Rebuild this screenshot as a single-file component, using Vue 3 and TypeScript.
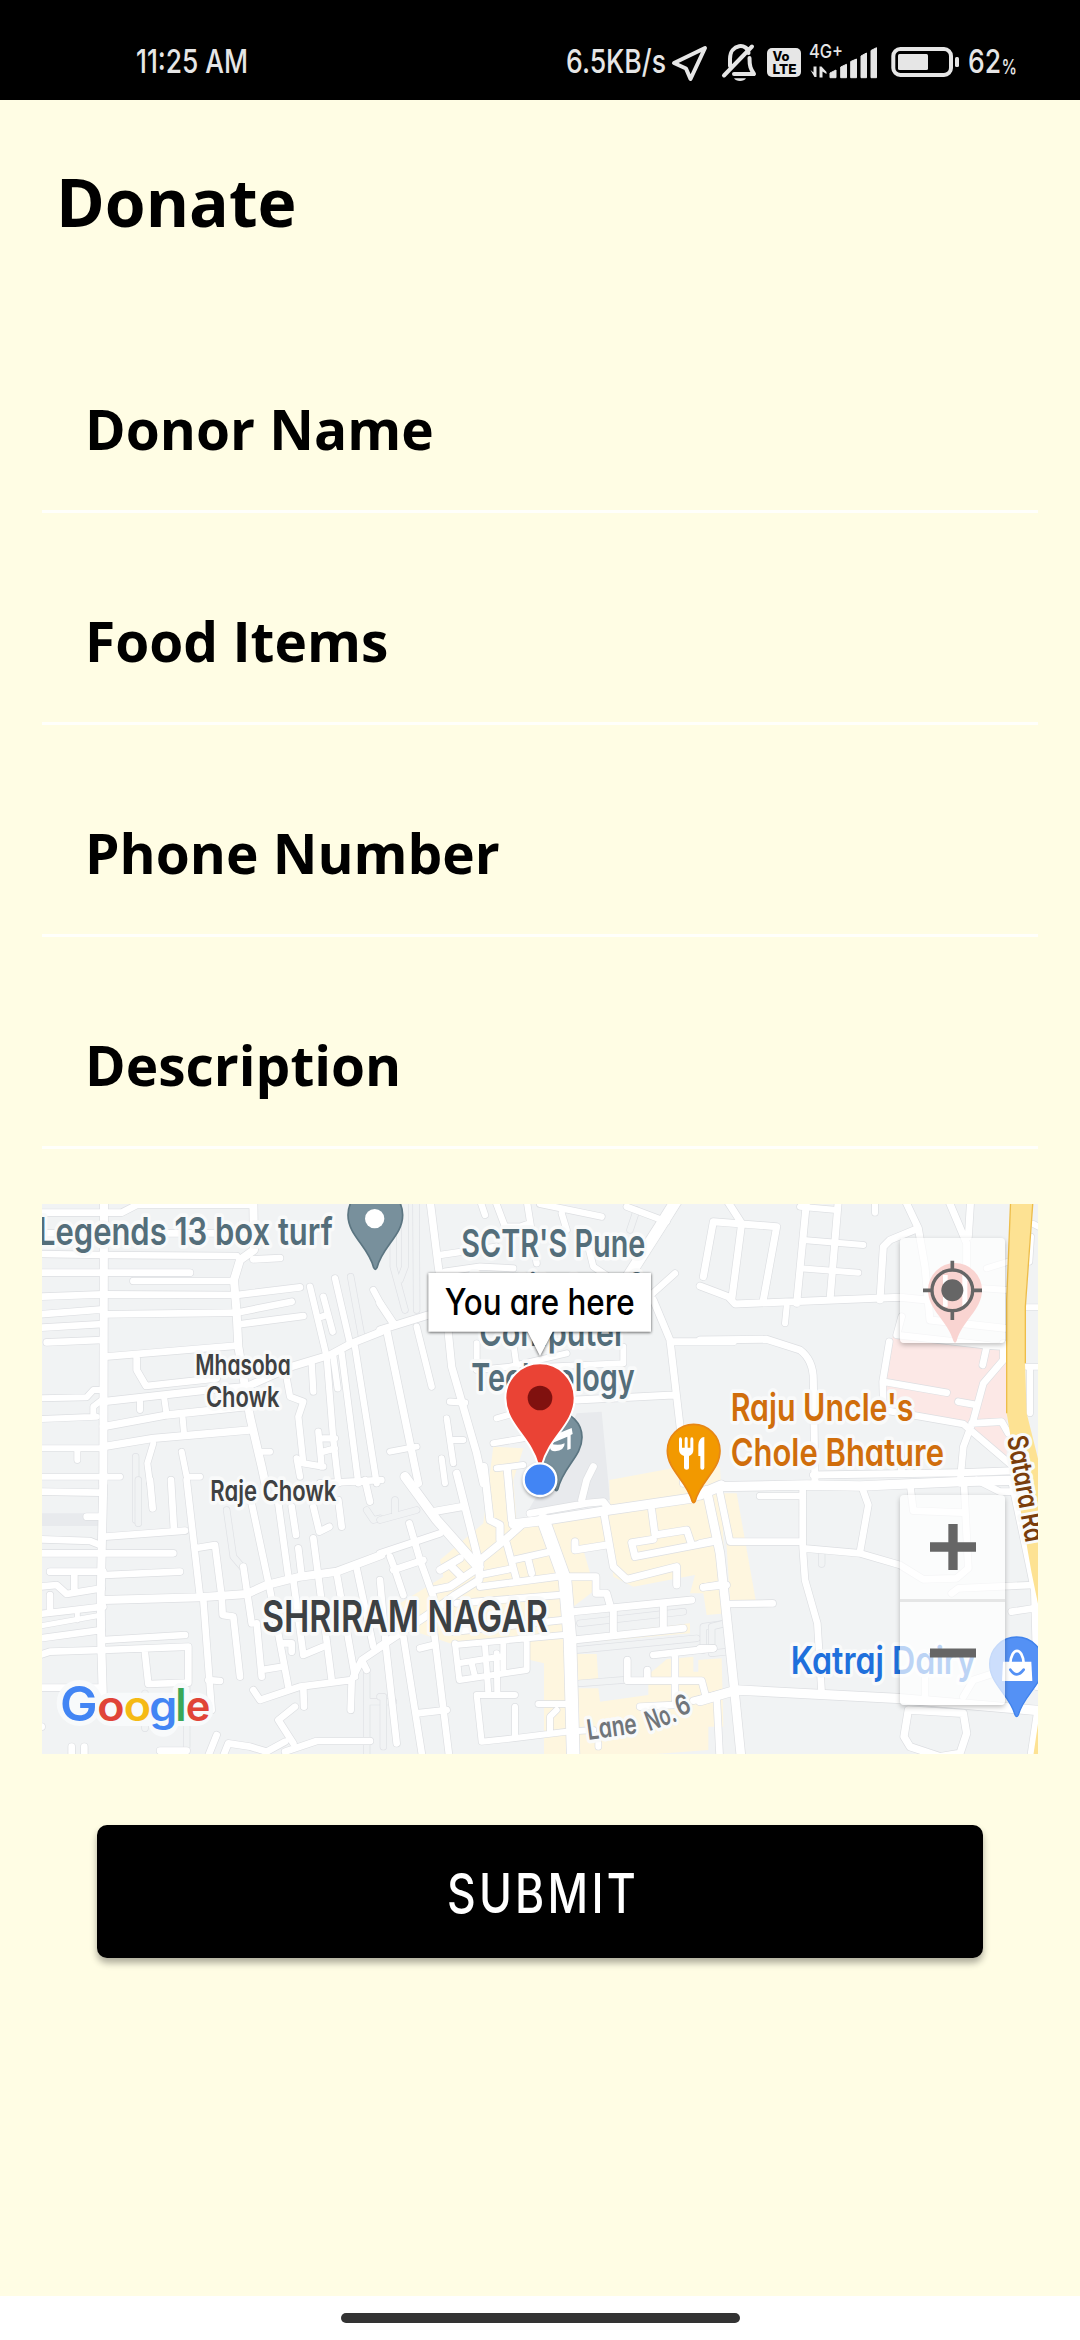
<script setup lang="ts">
interface Tile { x: number; y: number; roads: [number, string][]; alleys: string }
interface Label { x: number; y: number; size: number; len: number; text: string; color: string; rotate?: number; weight?: number }

const fields: string[] = ['Donor Name', 'Food Items', 'Phone Number', 'Description']

const tiles: Tile[] = [
  {
    x: 0, y: 0,
    roads: [
      [24, 'M192 0L190 850M640 0L642 150L600 180L582 240L590 340L595 440L615 560L630 650L665 800L680 870'],
      [20, 'M0 38H245L290 15H640M0 100H640M0 162L190 165L590 168M640 178L720 174M0 218H450M280 243H580M0 290L190 283L590 285L780 262M0 343L190 328M190 343L590 338L755 305M0 383L190 372M605 372L790 348M20 427L185 420M195 470L590 437M290 475V510L318 558L530 535'],
      [22, 'M190 605L520 568L620 560L760 498L870 465L935 430L1024 395M190 680L380 645L620 620M190 740L340 715L630 690'],
      [18, 'M0 745H190M112 750V780M0 657L170 650M160 650V620L185 600M0 595L140 592L160 570H185M300 605V630M372 590L380 645M428 655L432 700M340 730L322 790L330 850M425 755L440 830H480M0 830H240M665 755H690'],
      [19, 'M810 260L860 470L880 720L895 850M850 290L878 395M845 350L860 345M885 235L930 430M905 460L955 850M945 440L1010 850M815 490L820 575M880 470L893 565M740 535L750 590L790 605L775 650L790 790L850 800M835 695L845 800M850 715H885M850 755L885 745M770 775L780 830M1000 270L1024 315'],
    ],
    alleys: 'M932 230L965 410M287 770V960',
  },
  {
    x: 1020, y: 0,
    roads: [
      [22, 'M150 0L175 200L200 350L215 500L290 760L310 850M0 390L145 345M0 310L40 370M20 390L115 850'],
      [19, 'M110 380L155 560M210 605L255 608M180 165L350 140M195 215L300 200L400 205M300 0L315 45M345 0L375 80H420L450 70M440 0L470 190M480 12L665 50M545 40L560 90M740 20L860 65M625 140L640 200L700 240M885 220L740 350'],
      [34, 'M890 0L840 80L700 300'],
      [21, 'M820 300L870 420L905 720L910 850M870 425H1060M590 600L880 585'],
      [18, 'M350 655L385 645M340 730L430 715M200 655L220 790M220 720H250M30 755L110 740M185 775L195 850M350 805L430 795M290 430V510L390 500L560 460M500 500L730 490V440M400 430L410 500'],
    ],
    alleys: 'M40 60V200L75 330M75 0V200L60 240M108 0L110 330M770 30L750 90',
  },
  {
    x: 1980, y: 0,
    roads: [
      [21, 'M0 258L85 290L105 312L400 300L600 292L680 300M10 230L40 65L230 80L190 300M80 0L125 70L95 300M320 0L290 310M415 0L390 300'],
      [18, 'M300 20L410 30M310 120L490 135M300 205L475 218M525 0V38M260 320L255 370M860 205L925 185M800 262L925 270'],
      [21, 'M615 0L655 85L570 120L550 140L540 300M655 85L675 200L690 360L915 385M745 0L800 130V220M812 0L805 110M0 420L200 418L300 450Q340 480 340 540L345 850M340 825L780 818L940 812M605 820L600 760'],
      [20, 'M605 350L590 405L870 437L915 440M568 425L548 545L550 620M550 545L740 578M550 630L790 672L940 800M860 440L848 495M910 430V480L850 550L820 660L790 740L780 850M775 605L830 615M815 670L905 665L925 700'],
      [18, 'M975 322H1020M1000 72L1020 82M993 110L988 185M980 500H1020M990 500V640'],
    ],
    alleys: '',
  },
  {
    x: 0, y: 840,
    roads: [
      [24, 'M190 0L182 350L184 500L190 700M190 360L480 352L620 342L680 315L780 290L890 275L1024 225'],
      [20, 'M0 35L180 38M140 110H180M0 178L150 183L180 195M0 220H400M195 170L435 152M30 275H190M195 285L420 275M103 280V330M0 320L50 315L80 342L185 325M30 345V390M0 402L190 380M0 475L185 450M190 480L435 465M0 525L30 515L190 510L445 500V608L325 612L315 520M0 623H180'],
      [15, 'M0 438L185 405M112 395V420'],
      [20, 'M440 0L480 350M490 360L515 690M393 0L402 150M330 0L338 85M465 205L525 195L545 350L548 405L580 410L600 590M610 260L635 430M635 70L690 330L745 620M715 70L745 290M755 80L768 165M775 205L785 290M820 175L835 290L875 600M820 80L838 155L868 140'],
      [20, 'M760 300L790 525L850 500M640 630L660 660L780 620L935 600L965 540L1024 500M890 280L945 590M950 265L1000 500M935 600L932 690M790 625L792 680M650 430L665 590M665 570L725 560M725 490H755V515M895 60L905 140M975 0L990 65M840 10L1024 0M965 540L980 570'],
      [20, 'M765 680L715 720L760 790M360 812H440M545 840L565 790L630 800L680 815L735 785M735 815L830 783H990M530 765L500 840M95 800V840M133 800V840M505 600L540 603M0 740H5'],
    ],
    alleys: 'M295 0V130M560 90L580 230L610 265M980 580V840M440 620V800M315 640V745M990 665H1060M1020 115L1000 120L980 90',
  },
  {
    x: 1020, y: 840,
    roads: [
      [28, 'M400 132L500 120L690 90L930 55L1024 15M75 -10L170 120L285 250'],
      [38, 'M490 120L555 300L570 480L580 840'],
      [22, 'M230 -20L295 240M160 95L245 80M312 -40L330 120L360 135V180M382 -30L395 120M430 130L380 175L300 240L297 300L225 345L150 400L0 500M180 270L240 235M215 260L245 290M160 330L210 320L300 260'],
      [20, 'M0 220L180 160M88 130L120 240L160 350M30 230L45 270L70 345M40 270L130 240M300 285L400 265M380 190L410 300M400 240L510 215M445 240L455 280M300 320L530 290M230 370L540 345M220 455L550 420M0 300L20 520L50 790M70 470L130 850M160 440L210 850M120 505L160 495M110 700L200 690'],
      [21, 'M450 100L620 70L670 65L690 90M605 60L620 0L640 -40M670 90L700 260L740 298L890 260V315M585 185V210L680 195M815 90L825 165L920 150L935 195M1000 185L765 230L755 188L820 178M560 290H648V340H680L690 375M580 395L935 360M700 385V460M850 370V450M580 480L910 445'],
      [20, 'M820 525L1000 505M885 530V660M742 540V602H965L975 640M802 570V600M780 680L880 675M940 662L1060 632M970 322L1040 315'],
      [18, 'M225 495L550 465M225 490L238 600L440 570V485M370 490V570M315 495L325 640M350 520L352 640M235 550L360 530M275 550L285 590M290 645H405M290 645L305 785L400 775L560 755L640 750M405 680V770M475 672H560M510 755V710L530 690M655 790V800'],
    ],
    alleys: 'M0 120L110 90M45 100V60M590 510L950 475M600 430L910 395M600 610L730 600M1040 430L970 440V510M0 650H10V800',
  },
  {
    x: 1980, y: 840,
    roads: [
      [28, 'M0 45L60 20L320 15L480 18L780 5L960 0M0 662L110 630L590 655L1020 692'],
      [26, 'M20 30L60 220L100 600L125 850'],
      [20, 'M58 30L90 185L300 185M180 48H300M308 20V200L315 300L352 430L365 640M310 205L480 220L600 255L670 298L770 295L805 265L792 10M485 20L505 75L480 215M630 10L640 92L790 98M755 340L775 325L1000 315M935 395L1000 385M90 372L218 370M10 322L70 312M0 190L50 180M50 650L60 850M675 590V650M790 650L820 600L880 580M0 505H40M830 0L900 35H945'],
      [22, 'M625 690L790 700L800 760L780 820L720 830L630 800L612 770ZM935 0L975 190L1004 330L1012 620M1014 690L990 850'],
    ],
    alleys: 'M365 220V252M75 430L35 440V520L80 515',
  },
]

const slate = '#546e7a'
const ink = '#3f4142'
const labels: Label[] = [
  { x: -6, y: 134, size: 114, len: 884, text: 'Legends 13 box turf', color: slate },
  { x: 1264, y: 170, size: 114, len: 552, text: "SCTR'S Pune", color: slate },
  { x: 1290, y: 304, size: 114, len: 510, text: 'Institute of', color: slate },
  { x: 1318, y: 438, size: 114, len: 440, text: 'Computer', color: slate },
  { x: 1294, y: 574, size: 114, len: 490, text: 'Technology', color: slate },
  { x: 466, y: 524, size: 84, len: 286, text: 'Mhasoba', color: ink },
  { x: 498, y: 620, size: 84, len: 220, text: 'Chowk', color: ink },
  { x: 511, y: 902, size: 84, len: 378, text: 'Raje Chowk', color: ink },
  { x: 666, y: 1297, size: 133, len: 858, text: 'SHRIRAM NAGAR', color: '#3c4043' },
  { x: 2072, y: 664, size: 114, len: 548, text: "Raju Uncle's", color: '#d06e0c' },
  { x: 2072, y: 798, size: 114, len: 640, text: 'Chole Bhature', color: '#d06e0c' },
  { x: 2252, y: 1422, size: 114, len: 556, text: 'Katraj Dairy', color: '#1f70dc' },
  { x: 1645, y: 1620, size: 84, len: 150, text: 'Lane', color: '#70757a', rotate: -8 },
  { x: 1828, y: 1594, size: 82, len: 92, text: 'No.', color: '#70757a', rotate: -20 },
  { x: 1919, y: 1550, size: 84, len: 42, text: '6', color: '#70757a', rotate: -22 },
  { x: 2901, y: 712, size: 84, len: 322, text: 'Satara Rd', color: '#7a3d0b', rotate: 80 },
]

const logo = [
  { c: 'G', x: 60, s: 146, w: 113, f: '#4285f4' },
  { c: 'o', x: 172, s: 124, w: 82, f: '#e04438' },
  { c: 'o', x: 251, s: 124, w: 82, f: '#f5ba15' },
  { c: 'g', x: 328, s: 124, w: 84, f: '#4285f4' },
  { c: 'l', x: 406, s: 134, w: 34, f: '#3aa757' },
  { c: 'e', x: 437, s: 124, w: 74, f: '#e04438' },
]

// Teardrop marker outline: round head, tapering sides, small rounded tip.
function pin(cx: number, cy: number, r: number, tip: number): string {
  const t = r * 0.06
  return `M${cx - r} ${cy}A${r} ${r} 0 0 1 ${cx + r} ${cy}C${cx + r} ${cy + r * 0.75} ${cx + r * 0.25} ${cy + r * 1.15} ${cx + t} ${tip - t}Q${cx} ${tip + t} ${cx - t} ${tip - t}C${cx - r * 0.25} ${cy + r * 1.15} ${cx - r} ${cy + r * 0.75} ${cx - r} ${cy}Z`
}
</script>

<template>
  <div class="screen">
    <header class="status">
      <svg class="status-time" width="300" height="100" viewBox="0 0 300 100">
        <text x="136" y="73.3" font-size="33" textLength="112" lengthAdjust="spacingAndGlyphs">11:25 AM</text>
      </svg>
      <svg class="status-icons" width="540" height="100" viewBox="0 0 540 100">
        <text x="26" y="73.3" font-size="33" textLength="100" lengthAdjust="spacingAndGlyphs">6.5KB/s</text>
        <path class="line" d="M134 63L165 48L150.5 79L146 68.5Z" />
        <path class="line" d="M190 66V59C190 43 208 43 208.500 53M209.500 58C209.500 66 210.500 69 214 74H194M184 75.500L212 46.500" />
        <path d="M194 78.300H206C204 82 196 82 194 78.300Z" />
        <rect x="227" y="48" width="34" height="29" rx="5" />
        <g class="volte">
          <text x="232.500" y="61" font-size="12.500" textLength="17" lengthAdjust="spacingAndGlyphs">Vo</text>
          <text x="232.500" y="74" font-size="13.500" textLength="24" lengthAdjust="spacingAndGlyphs">LTE</text>
        </g>
        <text x="269" y="58" font-size="19" textLength="34" lengthAdjust="spacingAndGlyphs">4G+</text>
        <path d="M270.500 70L273.500 72.500V66.500H276.500V77H274.500ZM279.500 66.500H281.500L286.500 72V74L282.500 71.500V77.500H279.500Z" />
        <path d="M290 73L296 70V77.700H290ZM300.700 67L306.500 64.300V77.700H300.700ZM310.700 61.500L316.500 59V77.700H310.700ZM321 56L326.500 53V77.700H321ZM331 50.500L336.500 47.700V77.700H331Z" stroke="#e6e6e6" stroke-linejoin="round" />
        <rect class="line" x="353.300" y="49" width="57.700" height="26" rx="7" />
        <rect x="358" y="54" width="30" height="16" rx="1.500" />
        <rect x="415" y="57" width="4" height="10" rx="1.500" />
        <text x="428" y="73.300" font-size="33" textLength="33" lengthAdjust="spacingAndGlyphs">62</text>
        <text x="461.500" y="74" font-size="20" textLength="15.500" lengthAdjust="spacingAndGlyphs">%</text>
      </svg>
    </header>

    <main class="page">
      <h1 class="title">Donate</h1>
      <form class="form" @submit.prevent>
        <label v-for="f in fields" :key="f" class="field">{{ f }}</label>

        <div class="map">
          <svg class="map-art" viewBox="6 12 2988 1650">
            <rect x="0" y="0" width="3000" height="1680" fill="#f1f3f4" />
            <g fill="#e8eaed">
              <path d="M6 940H175V978H6ZM1610 640L1685 635L1710 900L1460 940L1540 800Z" />
            </g>
            <g fill="#fef6df">
              <path d="M1360 740L1450 745L1420 840L1430 970L1520 960L1710 920L1708 840L1950 795L2040 800L2060 1240L2000 1245L1990 1180L1950 1180L1965 1125L1780 1160L1720 1130L1710 1040L1630 1050L1665 1170L1600 1220L1570 1320L1230 1330L1140 1300L1080 1210L1210 1130L1200 1080L1330 970Z" />
              <path d="M1470 1320L1580 1315L1610 1680H1512V1390L1470 1380ZM1610 1362H1670L1675 1440H1610ZM1605 1330L1950 1300V1270L1605 1310Z" />
              <path d="M1615 1465H1675L1680 1505L1825 1485V1440L1830 1420L1880 1378L1960 1370V1415H1975V1380L2045 1375L2050 1580H2005V1650L1610 1680Z" />
              <path d="M2050 880H2090L2147 1200H2070Z" />
            </g>
            <path fill="#fce8e6" d="M2560 400L2880 440L2900 480V770L2790 680L2540 640L2530 560Z" />

            <g v-for="t in tiles" :key="`a${t.x}-${t.y}`" :transform="`translate(${t.x} ${t.y})`" class="road">
              <path :d="t.alleys" stroke="#dfe1e5" stroke-width="22" />
              <path :d="t.alleys" stroke="#f1f3f4" stroke-width="18" />
            </g>
            <g v-for="t in tiles" :key="`c${t.x}-${t.y}`" :transform="`translate(${t.x} ${t.y})`" class="road">
              <path v-for="(r, i) in t.roads" :key="i" :d="r[1]" stroke="#dddfe2" :stroke-width="r[0] + 4" />
            </g>
            <g v-for="t in tiles" :key="`r${t.x}-${t.y}`" :transform="`translate(${t.x} ${t.y})`" class="road">
              <path v-for="(r, i) in t.roads" :key="i" :d="r[1]" stroke="#fff" :stroke-width="r[0]" />
            </g>
            <path fill="#fde293" d="M2912 0H2979L2955 320V490L2960 640L3000 800V1240L2975 1120L2940 920L2915 730L2900 640V300Z" />
            <path fill="none" stroke="#edbd4a" stroke-width="4" d="M2912 0L2900 300V640M2979 0L2956 320V490" />
            <path fill="#fde293" d="M3000 1530L2978 1680H3000Z" />

            <path :d="pin(1006, 45, 82, 208)" fill="#78909c" stroke="#5b7581" stroke-width="5" />
            <circle cx="1004" cy="56" r="29" fill="#fff" />
            <path :d="pin(1549, 712, 77, 872)" fill="#78909c" stroke="#5b7581" stroke-width="5" />
            <path fill="#fff" d="M1530 710L1595 684L1598 702L1592 705V746L1582 750V710L1535 730ZM1530 728Q1550 740 1574 730Q1574 752 1545 754Q1530 754 1530 742Z" />
            <path :d="pin(1961, 752, 79, 908)" fill="#f29900" stroke="#e78716" stroke-width="5" />
            <g fill="#fff">
              <path d="M1917 718Q1917 712 1921 712T1926 718V743H1934V716Q1934 711 1938.500 711T1943 716V743H1951V718Q1951 712 1955.500 712T1960 718V750Q1960 764 1947 768V804Q1947 809 1940 809T1932 804V768Q1918 764 1917 750Z" />
              <path d="M1975 735Q1977 712 1993 711V803Q1993 809 1987 809T1981 803V768H1975Z" />
            </g>
            <path :d="pin(2930, 1392, 81, 1550)" fill="#5491f5" stroke="#3f82ec" stroke-width="4" />
            <path fill="#fff" d="M2889 1385H2974L2977 1443H2886Z" />
            <path fill="none" stroke="#fff" stroke-width="8" d="M2911 1390C2914 1340 2948 1340 2951 1390" />
            <path fill="none" stroke="#5491f5" stroke-width="8" stroke-linecap="round" d="M2911 1409Q2930 1437 2951 1409" />
            <path :d="pin(2745, 270, 81, 428)" fill="#ec7067" />
            <path fill="#fff" d="M2709 225H2723V320H2709ZM2767 225H2782V320H2767Z" />

            <text
              v-for="l in labels" :key="l.text" class="label"
              :font-size="l.size" :fill="l.color" :textLength="l.len" lengthAdjust="spacingAndGlyphs"
              :transform="`translate(${l.x} ${l.y}) rotate(${l.rotate ?? 0})`"
            >{{ l.text }}</text>

            <g transform="translate(0 1562)">
              <rect class="halo" x="66" y="-106" width="105" height="106" rx="52" />
              <rect class="halo" x="178" y="-68" width="326" height="68" rx="34" />
              <rect class="halo" x="340" y="-68" width="60" height="100" rx="30" />
              <rect class="halo" x="414" y="-98" width="18" height="98" rx="8" />
              <text v-for="(g, i) in logo" :key="`f${i}`" class="logo" :x="g.x" y="0" :font-size="g.s" :fill="g.f" :textLength="g.w" lengthAdjust="spacingAndGlyphs">{{ g.c }}</text>
            </g>

            <path :d="pin(1500, 594, 104, 800)" fill="#ea4335" stroke="#fff" stroke-width="6" />
            <circle cx="1500" cy="594" r="37" fill="#80110f" />
            <circle class="dot" cx="1500" cy="839" r="49" />
            <path class="callout" d="M1165 219H1833V395H1538L1500 468L1463 395H1165Z" />
            <text class="callout-text" x="1214" y="345" font-size="110" textLength="570" lengthAdjust="spacingAndGlyphs">You are here</text>
          </svg>

          <div class="controls">
            <button class="control" type="button" aria-label="My location">
              <svg width="105" height="105" viewBox="0 0 315 315">
                <circle cx="157" cy="157" r="61" fill="none" stroke="#666" stroke-width="10" />
                <circle cx="157" cy="157" r="33" fill="#666" />
                <path d="M157 68V97M157 217V246M69 157H97M217 157H246" stroke="#666" stroke-width="11" />
              </svg>
            </button>
            <div class="zoom">
              <button class="control-half" type="button" aria-label="Zoom in">
                <svg width="46" height="46" viewBox="0 0 46 46"><path d="M23 0V46M0 23H46" stroke="#666" stroke-width="9.300" /></svg>
              </button>
              <button class="control-half" type="button" aria-label="Zoom out">
                <svg width="46" height="46" viewBox="0 0 46 46"><path d="M0 23H46" stroke="#666" stroke-width="9" /></svg>
              </button>
            </div>
          </div>
        </div>

        <button class="submit" type="submit">
          <svg width="220" height="80" viewBox="0 0 220 80">
            <text x="17" y="60.500" font-size="55" textLength="192" lengthAdjust="spacingAndGlyphs">SUBMIT</text>
          </svg>
        </button>
      </form>
    </main>

    <footer class="nav"><span class="nav-pill"></span></footer>
  </div>
</template>

<style>
body { margin: 0; }
</style>

<style scoped>
.screen {
  width: 1080px;
  height: 2340px;
  display: flex;
  flex-direction: column;
  overflow: hidden;
  background: #fffde4;
  font-family: "Open Sans", "Noto Sans", sans-serif;
}
svg { display: block; }
svg text {
  font-family: Inter, "Noto Sans", sans-serif;
  font-feature-settings: "cv11" 1;
}
.status {
  flex: none;
  height: 100px;
  display: flex;
  justify-content: space-between;
  background: #000;
  fill: #e6e6e6;
}
.status text { font-weight: 500; }
.line {
  fill: none;
  stroke: #e6e6e6;
  stroke-width: 4;
  stroke-linejoin: round;
  stroke-linecap: round;
}
.status .volte text { fill: #000; font-weight: 800; }
.page { flex: 1; padding: 0 42px; }
.title {
  margin: 0;
  box-sizing: border-box;
  padding: 56px 0 0 14px;
  height: 201px;
  font-size: 66px;
  line-height: 90px;
  font-weight: 700;
}
.form { display: flex; flex-direction: column; }
.field {
  height: 212px;
  box-sizing: border-box;
  border-bottom: 3px solid #fffffb;
  padding: 90px 0 0 43px;
  font-size: 55px;
  line-height: 76px;
  font-weight: 700;
}
.map {
  position: relative;
  width: 996px;
  height: 550px;
  margin-top: 55px;
  overflow: hidden;
}
.map-art { width: 100%; height: 100%; }
.road path { fill: none; stroke-linecap: round; stroke-linejoin: round; }
.label {
  stroke: #f9fafa;
  stroke-width: 22;
  stroke-linejoin: round;
  paint-order: stroke;
  font-weight: 600;
}
.halo { fill: #f8fafb; stroke: #f8fafb; stroke-width: 32; stroke-linejoin: round; }
.logo { font-weight: 600; }
.dot { fill: #4285f4; stroke: #fff; stroke-width: 7; filter: drop-shadow(0 5px 5px rgba(0, 0, 0, .3)); }
.callout { fill: #fff; filter: drop-shadow(0 2px 4px rgba(0, 0, 0, .7)); }
.callout-text { font-weight: 500; }
.controls {
  position: absolute;
  top: 34px;
  right: 33px;
  display: flex;
  flex-direction: column;
  gap: 152px;
}
.control,
.zoom {
  padding: 0;
  border: 0;
  border-radius: 4px;
  width: 105px;
  background: rgba(255, 255, 255, .7);
  box-shadow: 0 2px 5px rgba(0, 0, 0, .25);
}
.control { height: 105px; }
.zoom { height: 210px; display: flex; flex-direction: column; }
.control-half {
  flex: 1;
  display: flex;
  align-items: center;
  justify-content: center;
  padding: 0;
  border: 0;
  background: none;
}
.control-half + .control-half { border-top: 3px solid #e5e6e6; }
.submit {
  align-self: center;
  width: 886px;
  height: 133px;
  margin-top: 71px;
  display: flex;
  align-items: center;
  justify-content: center;
  border: 0;
  border-radius: 10px;
  background: #000;
  fill: #fff;
  box-shadow: 0 5px 7px rgba(0, 0, 0, .32);
}
.submit text { letter-spacing: 4px; font-weight: 500; }
.nav {
  flex: none;
  height: 44px;
  box-sizing: border-box;
  padding-top: 17px;
  display: flex;
  justify-content: center;
  background: #fff;
}
.nav-pill { width: 399px; height: 10px; border-radius: 5px; background: #333; }
</style>
